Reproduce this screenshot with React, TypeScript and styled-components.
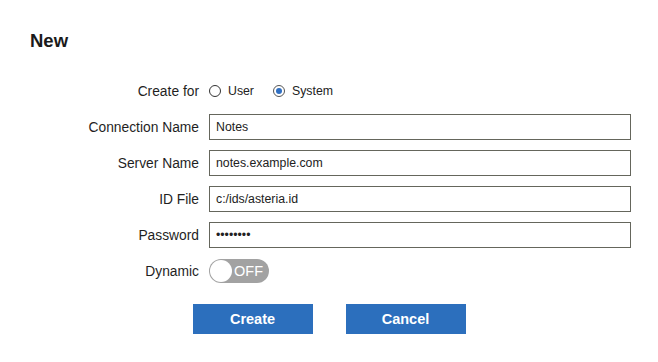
import * as React from "react";
import styled, {createGlobalStyle} from "styled-components";

const Global = createGlobalStyle`
  html, body {
    margin: 0;
    padding: 0;
    background: #ffffff;
    font-family: "Liberation Sans", Arial, sans-serif;
    color: #222222;
  }
`

const Page = styled.div`
  width: 658px;
  height: 362px;
  box-sizing: border-box;
  padding-top: 30px;
`
const Title = styled.h2`
  margin: 0 0 26px 30px;
  font-size: 18.5px;
  line-height: 22px;
  font-weight: bold;
  color: #1a1a1a;
`
const Form = styled.div`
  display: grid;
  grid-template-columns: 169px 422px;
  grid-auto-rows: 26px;
  column-gap: 10px;
  row-gap: 10px;
  padding-left: 30px;
  align-items: center;
`
const Label = styled.label`
  justify-self: end;
  font-size: 13.8px;
  color: #1f1f1f;
  white-space: nowrap;
`
const Field = styled.input`
  box-sizing: border-box;
  width: 100%;
  height: 26px;
  margin: 0;
  padding: 0 6px;
  border: 1px solid #65665c;
  border-radius: 0;
  font-family: "Liberation Sans", Arial, sans-serif;
  font-size: 12.3px;
  color: #222222;
  outline: none;
  background: #fff;
`
const Choices = styled.div`
  display: flex;
  align-items: center;
  font-size: 12.3px;
  color: #222;
`
const Choice = styled.span`
  display: flex;
  align-items: center;
  margin-right: 19px;
`
const Dot = styled.span<{ $on?: boolean }>`
  box-sizing: border-box;
  width: 12px;
  height: 12px;
  border-radius: 50%;
  border: 1px solid ${p => p.$on ? "#555" : "#333"};
  margin-right: 7px;
  display: flex;
  align-items: center;
  justify-content: center;
  &::after {
    content: "";
    display: ${p => p.$on ? "block" : "none"};
    width: 6px;
    height: 6px;
    border-radius: 50%;
    background: #2f6fc2;
  }
`
const Toggle = styled.div`
  width: 60px;
  height: 24px;
  border-radius: 12px;
  background: #a2a2a2;
  display: flex;
  align-items: center;
  box-sizing: border-box;
  padding-left: 1px;
  align-self: center;
`
const Knob = styled.span`
  width: 22px;
  height: 22px;
  border-radius: 50%;
  background: #ffffff;
`
const ToggleText = styled.span`
  margin-left: 2px;
  color: #ffffff;
  font-size: 14.5px;
`
const Buttons = styled.div`
  display: flex;
  justify-content: center;
  gap: 33px;
  margin-top: 20px;
`
const Button = styled.button`
  width: 120px;
  height: 30px;
  border: none;
  border-radius: 0;
  background: #2c6fbd;
  color: #ffffff;
  font-family: "Liberation Sans", Arial, sans-serif;
  font-weight: bold;
  font-size: 14.5px;
  padding: 0;
  cursor: pointer;
`

export default function App() {
    return (
        <Page>
            <Global/>
            <Title>New</Title>
            <Form>
                <Label>Create for</Label>
                <Choices>
                    <Choice><Dot/>User</Choice>
                    <Choice><Dot $on/>System</Choice>
                </Choices>
                <Label>Connection Name</Label>
                <Field readOnly defaultValue="Notes"/>
                <Label>Server Name</Label>
                <Field readOnly defaultValue="notes.example.com"/>
                <Label>ID File</Label>
                <Field readOnly defaultValue="c:/ids/asteria.id"/>
                <Label>Password</Label>
                <Field readOnly type="password" defaultValue="secret12"/>
                <Label>Dynamic</Label>
                <Toggle>
                    <Knob/>
                    <ToggleText>OFF</ToggleText>
                </Toggle>
            </Form>
            <Buttons>
                <Button>Create</Button>
                <Button>Cancel</Button>
            </Buttons>
        </Page>
    )
}
